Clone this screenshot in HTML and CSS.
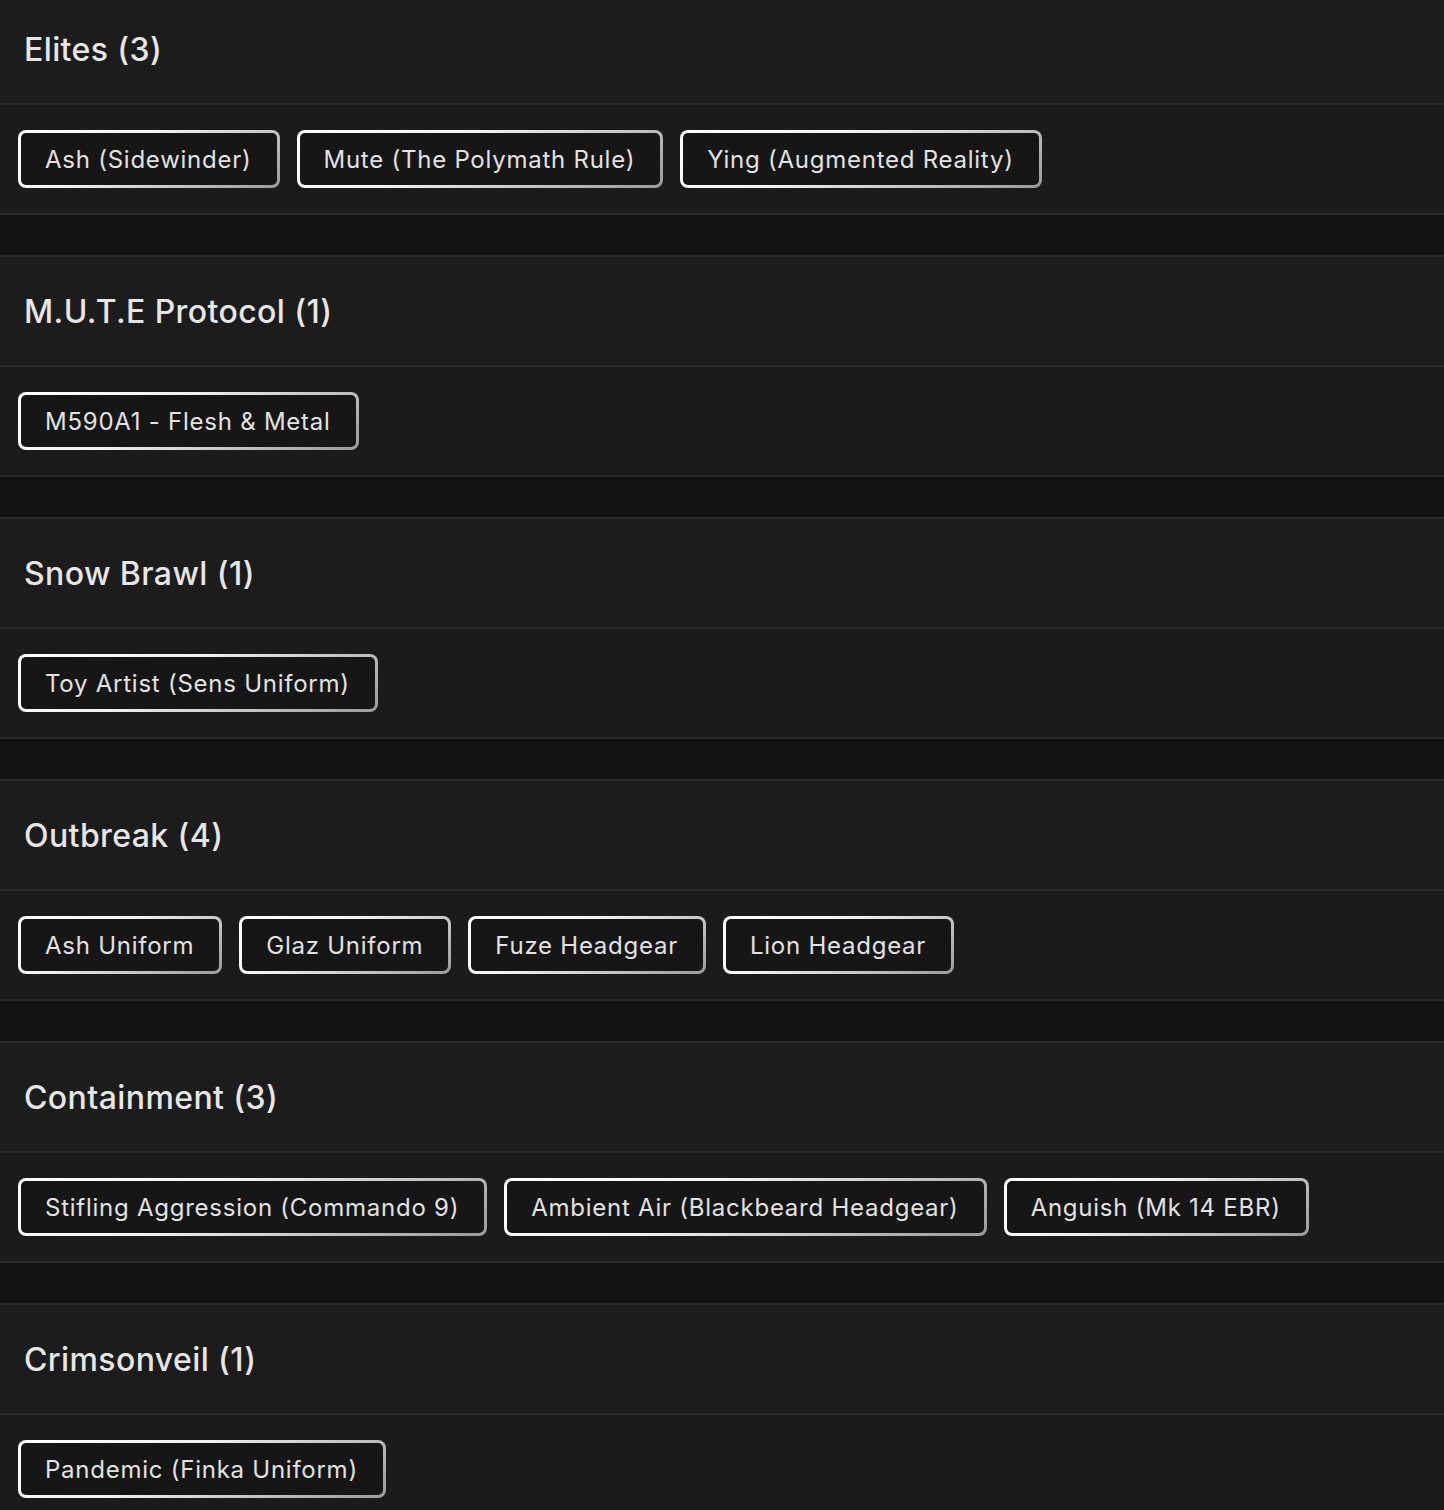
FILE: index.html
```html
<!DOCTYPE html>
<html lang="en">
<head>
<meta charset="utf-8">
<title>Collections</title>
<link rel="stylesheet" href="styles.css">
</head>
<body>
<main class="list">
  <section class="group">
    <h2 class="group-title">Elites (3)</h2>
    <div class="group-items">
      <span class="chip">Ash (Sidewinder)</span>
      <span class="chip">Mute (The Polymath Rule)</span>
      <span class="chip">Ying (Augmented Reality)</span>
    </div>
  </section>
  <section class="group">
    <h2 class="group-title">M.U.T.E Protocol (1)</h2>
    <div class="group-items">
      <span class="chip">M590A1 - Flesh &amp; Metal</span>
    </div>
  </section>
  <section class="group">
    <h2 class="group-title">Snow Brawl (1)</h2>
    <div class="group-items">
      <span class="chip">Toy Artist (Sens Uniform)</span>
    </div>
  </section>
  <section class="group">
    <h2 class="group-title">Outbreak (4)</h2>
    <div class="group-items">
      <span class="chip">Ash Uniform</span>
      <span class="chip">Glaz Uniform</span>
      <span class="chip">Fuze Headgear</span>
      <span class="chip">Lion Headgear</span>
    </div>
  </section>
  <section class="group">
    <h2 class="group-title">Containment (3)</h2>
    <div class="group-items">
      <span class="chip">Stifling Aggression (Commando 9)</span>
      <span class="chip">Ambient Air (Blackbeard Headgear)</span>
      <span class="chip">Anguish (Mk 14 EBR)</span>
    </div>
  </section>
  <section class="group">
    <h2 class="group-title">Crimsonveil (1)</h2>
    <div class="group-items">
      <span class="chip">Pandemic (Finka Uniform)</span>
    </div>
  </section>
</main>
</body>
</html>
```

FILE: styles.css
```css
html, body {
  margin: 0;
  padding: 0;
  background: #121212;
}
body {
  font-family: Inter, "Open Sans", "Liberation Sans", sans-serif;
  color: #e4e4e4;
  overflow: hidden;
}
.list {
  display: flex;
  flex-direction: column;
  gap: 40px;
  margin-top: -7px;
}
.group {
  border-top: 2px solid #2a2a2a;
  border-bottom: 2px solid #2a2a2a;
  background: #1b1b1b;
}
.group-title {
  margin: 0;
  height: 110px;
  box-sizing: border-box;
  display: flex;
  align-items: center;
  padding: 0 24px;
  font-size: 32px;
  font-weight: 500;
  letter-spacing: 0.4px;
  color: #e6e6e6;
  background: #1c1c1c;
  border-bottom: 2px solid #2a2a2a;
}
.group-items {
  height: 108px;
  box-sizing: border-box;
  display: flex;
  align-items: center;
  gap: 17px;
  padding: 0 18px;
  background: #1b1b1b;
}
.chip {
  display: inline-flex;
  align-items: center;
  height: 58px;
  box-sizing: border-box;
  padding: 0 25px 0 24px;
  border: 3px solid transparent;
  border-radius: 8px;
  background:
    linear-gradient(#161616, #161616) padding-box,
    linear-gradient(150deg, #ffffff 0%, #f2f2f2 40%, #9a9a9a 100%) border-box;
  font-size: 24px;
  font-weight: 400;
  letter-spacing: 0.75px;
  color: #e2e2e2;
  white-space: nowrap;
}
```
